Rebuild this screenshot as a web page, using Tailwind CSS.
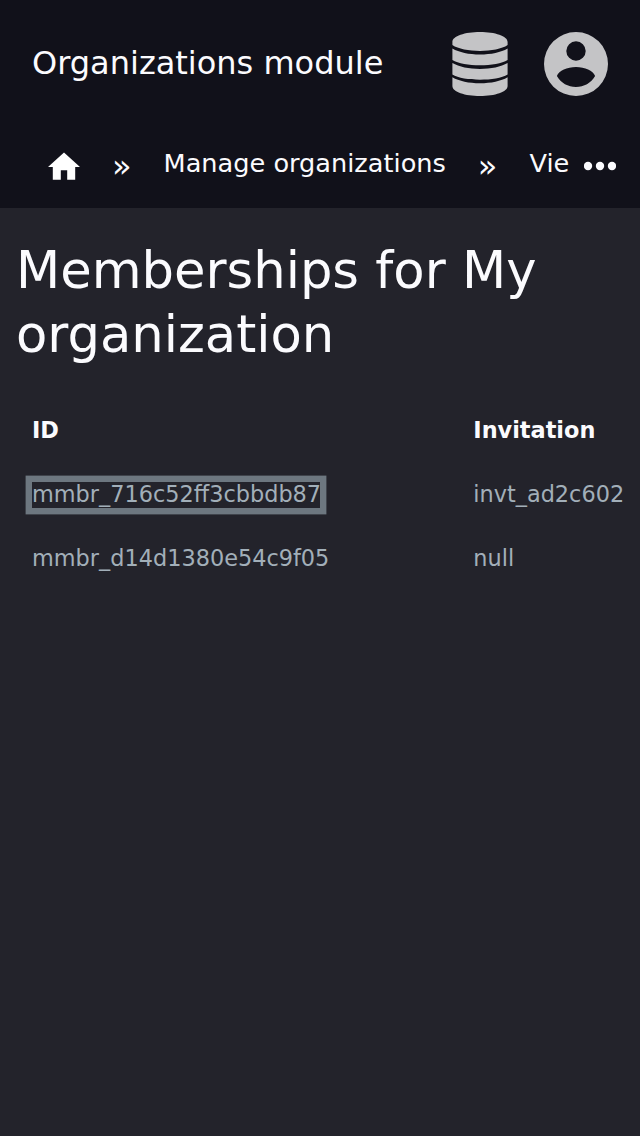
<!DOCTYPE html>
<html lang="en"><head><meta charset="utf-8"><title>Organizations module</title>
<script src="https://cdn.jsdelivr.net/npm/@tailwindcss/browser@4"></script></head>
<body class="h-[1136px] overflow-hidden bg-[#23232b] font-['DejaVu_Sans',sans-serif] text-[#fbfbfe]">
<header class="h-[208px] bg-[#11111a]">
<div class="flex h-32 items-center px-8">
<div class="grow pb-0.5 text-[32px] leading-[48px]">Organizations module</div>
<svg class="mr-9 h-16 w-14" viewBox="0 0 56 64" fill="#c4c4c6"><path d="M.4 10C.4 4 13 0 28 0s27.600 4 27.600 10v3C50 17 39 18.900 28 18.900S6 17 .4 13zM.4 16.500C7 20.400 17 22.500 28 22.500s21-2.100 27.600-6V28C50 31.500 39 33.300 28 33.300S6 31.500 .4 28zM.4 31C7 34.900 17 36.900 28 36.900s21-2 27.600-5.900V42.500C50 46 39 47.700 28 47.700S6 46 .4 42.500zM.4 45.300C7 49.200 17 51.300 28 51.300s21-2.100 27.600-6V54C55.600 60 43 64 28 64S.4 60 .4 54z"/></svg>
<svg class="size-16" viewBox="0 0 64 64" fill="#c4c4c6"><path fill-rule="evenodd" d="M32 0a32 32 0 1 0 0 64 32 32 0 0 0 0-64zM32 9.300a9.700 9.700 0 1 1 0 19.400 9.700 9.700 0 0 1 0-19.400zM12.900 44C15 38.500 23 35 32 35s17 3.500 19.100 9C47 51 40 55 32 55s-15-4-19.100-11z"/></svg>
</div>
<nav class="flex h-20 items-center pl-12 text-[25.6px]">
<svg class="mb-0.5 size-8" viewBox="0 0 20 20" fill="white"><path d="M8 18v-6h4v6h5v-8h3L10 1 0 10h3v8z"/></svg>
<span class="ml-8 pb-[5px] text-[32px] leading-8">»</span><span class="ml-8 pb-2.5">Manage organizations</span><span class="ml-8 pb-[5px] text-[32px] leading-8">»</span><span class="ml-8 pb-2.5">Vie</span>
<svg class="ml-[15px] size-8" viewBox="0 0 32 32" fill="#fbfbfe"><circle cx="4" cy="14" r="4.200"/><circle cx="16" cy="14" r="4.200"/><circle cx="28" cy="14" r="4.200"/></svg>
</nav></header>
<main class="px-4 pt-[30px]">
<h1 class="text-[51.2px] leading-[64px]">Memberships for My organization</h1>
<div class="mt-8 grid grid-cols-[441.3px_1fr] pl-4 text-[22.4px] leading-[64px] text-[#a2afb9]">
<b class="text-[#fbfbfe]">ID</b><b class="text-[#fbfbfe]">Invitation</b><span class="h-16"><span class="inline-block h-[26px] w-[288px] whitespace-nowrap leading-6 shadow-[0_0_0_6.4px_#6d7780]">mmbr_716c52ff3cbbdb87</span></span><span>invt_ad2c602</span><span>mmbr_d14d1380e54c9f05</span><span>null</span></div>
</main></body></html>
